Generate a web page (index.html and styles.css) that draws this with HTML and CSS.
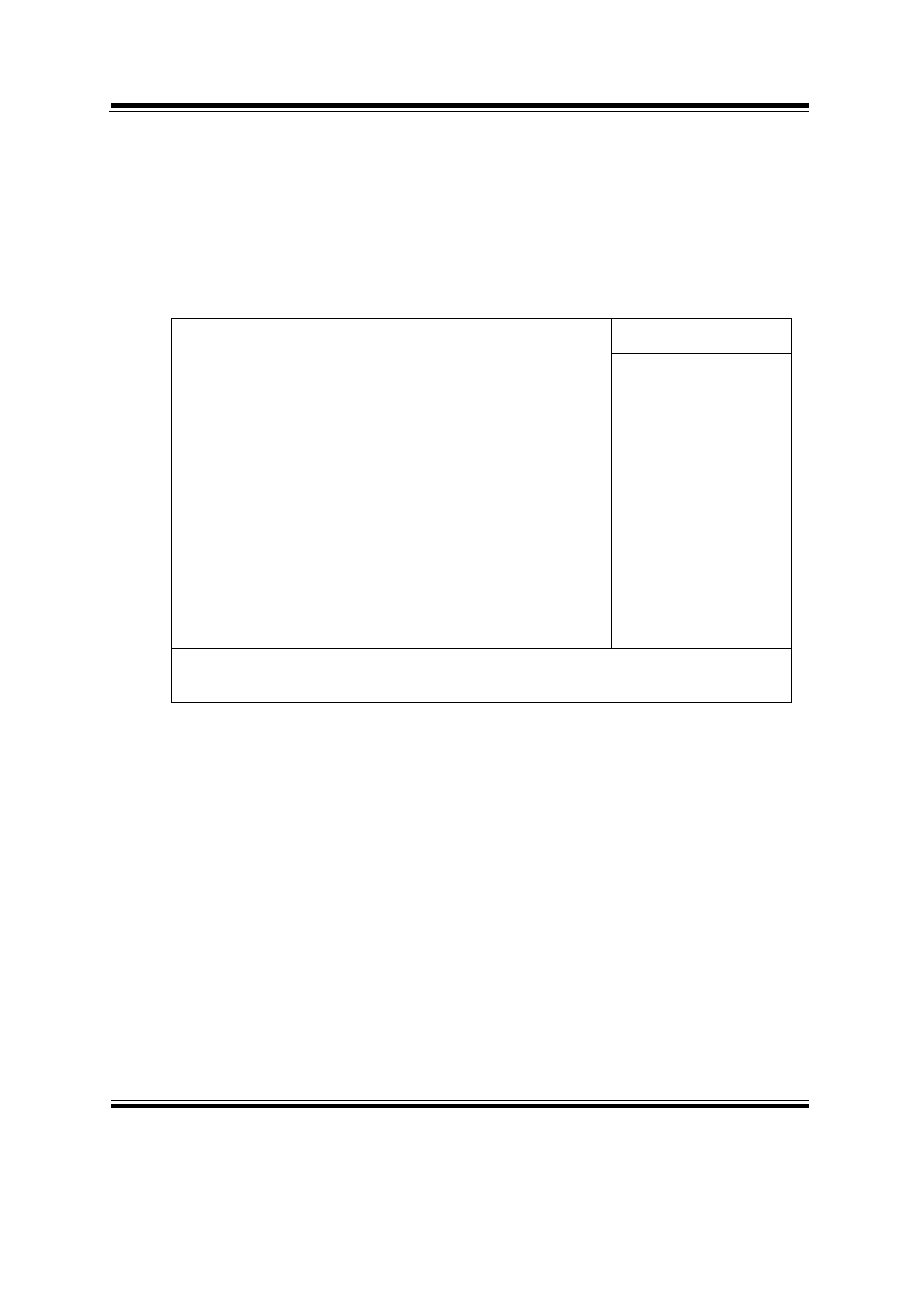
FILE: index.html
```html
<!DOCTYPE html>
<html lang="en">
<head>
  <meta charset="UTF-8">
  <meta name="viewport" content="width=device-width, initial-scale=1.0">
  <title>Setup Screen</title>
  <link rel="stylesheet" href="styles.css">
</head>
<body>

  <header class="page-header">
    <hr class="rule thick">
    <hr class="rule thin">
  </header>

  <main class="screen">
    <section class="settings"></section>
    <aside class="help">
      <div class="help-title"></div>
      <div class="help-text"></div>
    </aside>
    <div class="keys"></div>
  </main>

  <footer class="page-footer">
    <hr class="rule thin">
    <hr class="rule thick">
  </footer>

</body>
</html>
```

FILE: styles.css
```css
* {
  box-sizing: border-box;
}
body {
  display: flex;
  flex-direction: column;
  min-height: 100vh;
  margin: 0;
  padding: 103px 109px 190px;
  background-color: #fff;
  font-family: "Liberation Sans", Arial, sans-serif;
}

/* double rules at the top and bottom of the page */
.page-header,
.page-footer {
  display: flex;
  flex-direction: column;
  gap: 3px;
}
.page-footer {
  margin-top: auto;
  padding-left: 2px;
}
.rule {
  width: 100%;
  margin: 0;
  border: 0;
  background-color: #000;
}
.thin {
  height: 1px;
}
.thick {
  height: 4px;
}
.page-header .thick {
  width: auto;
  height: 5px;
  margin-left: 2px;
}

/* setup screen frame */
.screen {
  display: grid;
  grid-template-columns: 1fr 180px;
  margin: 206px 17px 60px 62px;
  border: 1px solid #000;
}
.help {
  display: flex;
  flex-direction: column;
  border-left: 1px solid #000;
}
.help-title {
  min-height: 35px;
  border-bottom: 1px solid #000;
}
.help-text {
  flex: 1;
  min-height: 294px;
}
.keys {
  grid-column: 1 / -1;
  min-height: 54px;
  border-top: 1px solid #000;
}
```
